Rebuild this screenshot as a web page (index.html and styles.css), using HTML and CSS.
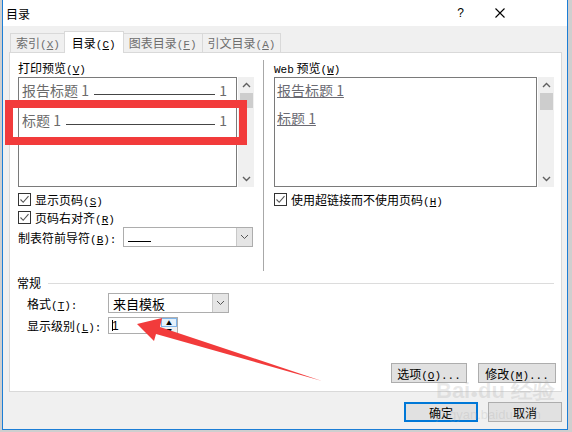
FILE: index.html
```html
<!DOCTYPE html>
<html>
  <head>
    <meta charset="UTF-8" />
    <title>目录</title>
    <link rel="stylesheet" href="styles.css">
  </head>
  <body>
    <div id="dialog">
      <!-- 标题栏 -->
      <div class="titlebar">
        <span class="title">目录</span>
        <span class="help">?</span>
        <span class="close">
          <svg width="10" height="10" viewBox="0 0 10 10"><path d="M0.5 0.5L9.5 9.5M9.5 0.5L0.5 9.5" stroke="#000" stroke-width="1.1" fill="none"/></svg>
        </span>
      </div>

      <div class="dlg-body">
        <div class="tabs">
          <div class="tab">索引<span class="acc">(<u>X</u>)</span></div>
          <div class="tab active">目录<span class="acc">(<u>C</u>)</span></div>
          <div class="tab">图表目录<span class="acc">(<u>F</u>)</span></div>
          <div class="tab">引文目录<span class="acc">(<u>A</u>)</span></div>
        </div>

        <div class="panel">
          <div class="top">
            <!-- 打印预览 -->
            <div class="col col-left">
              <div class="label">打印预览<span class="acc">(<u>V</u>)</span></div>
              <div class="preview-wrap">
                <div class="preview">
                  <div class="entry"><span>报告标题 1</span><span class="leader"></span><span>1</span></div>
                  <div class="entry entry-2"><span>标题 1</span><span class="leader"></span><span>1</span></div>
                </div>
                <div class="scrollbar">
                  <div class="sb-btn">
                    <svg width="9" height="6" viewBox="0 0 9 6"><path d="M1 5L4.5 1.5L8 5" stroke="#606060" stroke-width="1.4" fill="none"/></svg>
                  </div>
                  <div class="sb-thumb"></div>
                  <div class="sb-btn sb-down">
                    <svg width="9" height="6" viewBox="0 0 9 6"><path d="M1 1L4.5 4.5L8 1" stroke="#606060" stroke-width="1.4" fill="none"/></svg>
                  </div>
                </div>
              </div>
              <div class="check first">
                <span class="box"><svg width="11" height="11" viewBox="0 0 11 11"><path d="M1.5 5.5L4.2 8.3L9.5 2.2" stroke="#555" stroke-width="1.1" fill="none"/></svg></span>
                <span>显示页码<span class="acc">(<u>S</u>)</span></span>
              </div>
              <div class="check">
                <span class="box"><svg width="11" height="11" viewBox="0 0 11 11"><path d="M1.5 5.5L4.2 8.3L9.5 2.2" stroke="#555" stroke-width="1.1" fill="none"/></svg></span>
                <span>页码右对齐<span class="acc">(<u>R</u>)</span></span>
              </div>
              <div class="field-row tab-leader">
                <span class="field-label">制表符前导符<span class="acc">(<u>B</u>):</span></span>
                <div class="combo combo-leader">
                  <span class="combo-text"><span class="dash"></span></span>
                  <span class="combo-btn"><svg width="9" height="6" viewBox="0 0 9 6"><path d="M1 1L4.5 4.5L8 1" stroke="#555" stroke-width="1" fill="none"/></svg></span>
                </div>
              </div>
            </div>

            <div class="vline"></div>

            <!-- Web 预览 -->
            <div class="col col-right">
              <div class="label"><span class="acc">Web</span> 预览<span class="acc">(<u>W</u>)</span></div>
              <div class="preview-wrap">
                <div class="preview web">
                  <div class="link">报告标题 1</div>
                  <div class="link link-2">标题 1</div>
                </div>
                <div class="scrollbar">
                  <div class="sb-btn">
                    <svg width="9" height="6" viewBox="0 0 9 6"><path d="M1 5L4.5 1.5L8 5" stroke="#606060" stroke-width="1.4" fill="none"/></svg>
                  </div>
                  <div class="sb-thumb tall"></div>
                  <div class="sb-btn sb-down">
                    <svg width="9" height="6" viewBox="0 0 9 6"><path d="M1 1L4.5 4.5L8 1" stroke="#606060" stroke-width="1.4" fill="none"/></svg>
                  </div>
                </div>
              </div>
              <div class="check first">
                <span class="box"><svg width="11" height="11" viewBox="0 0 11 11"><path d="M1.5 5.5L4.2 8.3L9.5 2.2" stroke="#555" stroke-width="1.1" fill="none"/></svg></span>
                <span>使用超链接而不使用页码<span class="acc">(<u>H</u>)</span></span>
              </div>
            </div>
          </div>

          <!-- 常规 -->
          <div class="group">
            <span>常规</span>
            <span class="hline"></span>
          </div>
          <div class="field-row general first">
            <span class="field-label">格式<span class="acc">(<u>T</u>):</span></span>
            <div class="combo combo-format">
              <span class="combo-text">来自模板</span>
              <span class="combo-btn"><svg width="9" height="6" viewBox="0 0 9 6"><path d="M1 1L4.5 4.5L8 1" stroke="#555" stroke-width="1" fill="none"/></svg></span>
            </div>
          </div>
          <div class="field-row general level">
            <span class="field-label">显示级别<span class="acc">(<u>L</u>):</span></span>
            <div class="spin">
              <span class="spin-text"><span class="caret"></span>1</span>
              <span class="spin-btns">
                <span class="spin-up">▲</span>
                <span class="spin-down">▼</span>
              </span>
            </div>
          </div>

          <div class="btn-row">
            <button class="btn">选项<span class="acc">(<u>O</u>)...</span></button>
            <button class="btn btn-wide">修改<span class="acc">(<u>M</u>)...</span></button>
          </div>
        </div>

        <div class="footer">
          <button class="btn btn-default">确定</button>
          <button class="btn">取消</button>
        </div>
      </div>
    </div>

    <!-- 标注 -->
    <div class="mark-box"></div>
    <svg class="mark-arrow" width="572" height="432" viewBox="0 0 572 432">
      <polygon points="137,324 162,318 160,327 322,381 156,334 154,341" fill="#f23b3b"/>
    </svg>

    <div class="watermark">
      <div class="wm-logo">Bai<span class="paw">●</span>du 经验</div>
      <div class="wm-url">jingyan.baidu.com</div>
    </div>
  </body>
</html>
```

FILE: styles.css
```css
* {
  box-sizing: border-box;
}

html {
  background: #cfcfcf;
}

body {
  margin: 0;
  padding: 0;
  font-family: "Noto Sans CJK SC", "Noto Sans", sans-serif;
  font-size: 12px;
  color: #000;
  overflow: hidden;
}

.acc {
  font-family: "Liberation Mono", "DejaVu Sans Mono", monospace;
  font-size: 11px;
}

#dialog {
  margin-left: 2px;
  width: 566px;
  height: 430px;
  border: 1px solid #1c7ed6;
  border-top: none;
  background: #f0f0f0;
  display: flex;
  flex-direction: column;
}

/* 标题栏 */
.titlebar {
  height: 26px;
  background: #fff;
  display: flex;
  align-items: center;
  padding-left: 3px;
  flex-shrink: 0;
}

.title {
  font-size: 12px;
}

.help {
  margin-left: auto;
  font-family: "Liberation Sans", sans-serif;
  font-size: 12px;
}

.close {
  display: flex;
  margin-left: 31px;
  margin-right: 62px;
}

.dlg-body {
  flex: 1;
  padding: 5px 0 0 6px;
  display: flex;
  flex-direction: column;
}

/* 标签页 */
.tabs {
  display: flex;
  align-items: flex-end;
  height: 21px;
  padding-left: 1px;
}

.tab {
  height: 19px;
  line-height: 18px;
  padding: 0 5px;
  border: 1px solid #d9d9d9;
  border-bottom: none;
  color: #6d6d6d;
  margin-right: -1px;
  background: #f0f0f0;
}

.tab.active {
  height: 22px;
  line-height: 21px;
  margin: 0 -1px -1px -1px;
  padding: 0 7px;
  background: #fff;
  color: #000;
  position: relative;
  z-index: 1;
}

.panel {
  width: 553px;
  height: 340px;
  border: 1px solid #d9d9d9;
  background: #fff;
  display: flex;
  flex-direction: column;
}

.top {
  display: flex;
  height: 218px;
  flex-shrink: 0;
}

.col {
  padding-top: 7px;
}

.col-left {
  margin-left: 8px;
  width: 236px;
}

.col-right {
  margin-left: 10px;
  width: 280px;
}

.vline {
  width: 1px;
  background: #a8a8a8;
  margin: 7px 0 0 9px;
}

.label {
  height: 16px;
  line-height: 16px;
  margin-bottom: 1px;
}

/* 预览框 */
.preview-wrap {
  display: flex;
  height: 110px;
  gap: 1px;
}

.preview {
  flex: 1;
  border: 1px solid #7a7a7a;
  background: #fff;
  padding: 3px 9px 0 3px;
  font-size: 14px;
  color: #6b6b6b;
}

.entry {
  display: flex;
  line-height: 18px;
  height: 18px;
}

.entry-2 {
  margin-top: 12px;
}

.leader {
  flex: 1;
  height: 1px;
  background: #454545;
  align-self: flex-end;
  margin: 0 4px 4px 5px;
}

.preview.web {
  padding: 3px 3px 0 2px;
}

.link {
  line-height: 18px;
  height: 18px;
  text-decoration: underline;
  color: #6a6a72;
}

.link-2 {
  margin-top: 10px;
}

.scrollbar {
  width: 16px;
  background: #f0f0f0;
  display: flex;
  flex-direction: column;
  align-items: center;
}

.sb-btn {
  width: 16px;
  height: 16px;
  display: flex;
  align-items: center;
  justify-content: center;
}

.sb-thumb {
  width: 13px;
  height: 15px;
  background: #cdcdcd;
}

.sb-thumb.tall {
  height: 17px;
}

.sb-down {
  margin-top: auto;
}

/* 复选框 */
.check {
  display: flex;
  align-items: center;
  height: 18px;
  gap: 4px;
}

.check.first {
  margin-top: 3px;
}

.box {
  width: 13px;
  height: 13px;
  border: 1px solid #333;
  background: #fff;
  display: flex;
  align-items: center;
  justify-content: center;
}

/* 下拉框 */
.field-row {
  display: flex;
  align-items: center;
}

.tab-leader {
  margin-top: 1px;
  height: 20px;
}

.tab-leader .field-label {
  width: 105px;
}

.combo {
  height: 20px;
  border: 1px solid #adadad;
  background: #fff;
  display: flex;
  align-items: stretch;
}

.combo-leader {
  width: 130px;
}

.combo-text {
  flex: 1;
  display: flex;
  align-items: center;
  padding-left: 4px;
}

.dash {
  width: 23px;
  height: 1px;
  background: #000;
  margin-top: 8px;
}

.combo-btn {
  width: 16px;
  background: #e5e5e5;
  border-left: 1px solid #c8c8c8;
  display: flex;
  align-items: center;
  justify-content: center;
}

.group {
  display: flex;
  align-items: center;
  margin: 4px 7px 0 7px;
  height: 16px;
  line-height: 16px;
}

.hline {
  flex: 1;
  height: 1px;
  background: #dcdcdc;
  margin-left: 7px;
}

.general {
  padding-left: 17px;
}

.general .field-label {
  width: 81px;
}

.general.first {
  margin-top: 2px;
  height: 20px;
}

.combo-format {
  width: 121px;
  font-size: 13px;
}

.level {
  margin-top: 4px;
  height: 17px;
}

.spin {
  width: 70px;
  height: 17px;
  border: 1px solid #adadad;
  display: flex;
}

.spin-text {
  flex: 1;
  display: flex;
  align-items: center;
  padding-left: 3px;
  font-family: "Liberation Sans", sans-serif;
  font-size: 12px;
}

.caret {
  width: 1px;
  height: 11px;
  background: #000;
  margin-right: -1px;
}

.spin-btns {
  width: 16px;
  display: flex;
  flex-direction: column;
}

.spin-up,
.spin-down {
  flex: 1;
  font-size: 6px;
  line-height: 7px;
  text-align: center;
  background: #f0f0f0;
}

.spin-up {
  background: #e5f1fb;
  border: 1px solid #7eb4ea;
}

/* 按钮 */
.btn-row {
  margin-top: auto;
  display: flex;
  justify-content: flex-end;
  gap: 11px;
  padding: 0 5px 8px 0;
}

.btn {
  width: 76px;
  height: 20px;
  padding: 0;
  background: #e1e1e1;
  border: 1px solid #adadad;
  font-family: "Noto Sans CJK SC", sans-serif;
  font-size: 12px;
  color: #000;
}

.btn-wide {
  width: 78px;
}

.footer {
  display: flex;
  justify-content: flex-end;
  gap: 10px;
  margin-top: 10px;
  padding-right: 5px;
}

.footer .btn {
  width: 74px;
}

.btn-default {
  border: 2px solid #0078d7;
}

/* 红色标注 */
.mark-box {
  position: absolute;
  left: 5px;
  top: 100px;
  width: 242px;
  height: 45px;
  border: 8px solid #f23b3b;
}

.mark-arrow {
  position: absolute;
  left: 0;
  top: 0;
  pointer-events: none;
}

/* 水印 */
.watermark {
  position: absolute;
  left: 436px;
  top: 380px;
  color: rgba(170, 170, 170, 0.25);
  font-family: "Liberation Sans", sans-serif;
  pointer-events: none;
}

.wm-logo {
  font-size: 22px;
  font-weight: bold;
  line-height: 22px;
}

.paw {
  font-size: 13px;
}

.wm-url {
  font-size: 13px;
  line-height: 16px;
  margin-top: 2px;
}
```
